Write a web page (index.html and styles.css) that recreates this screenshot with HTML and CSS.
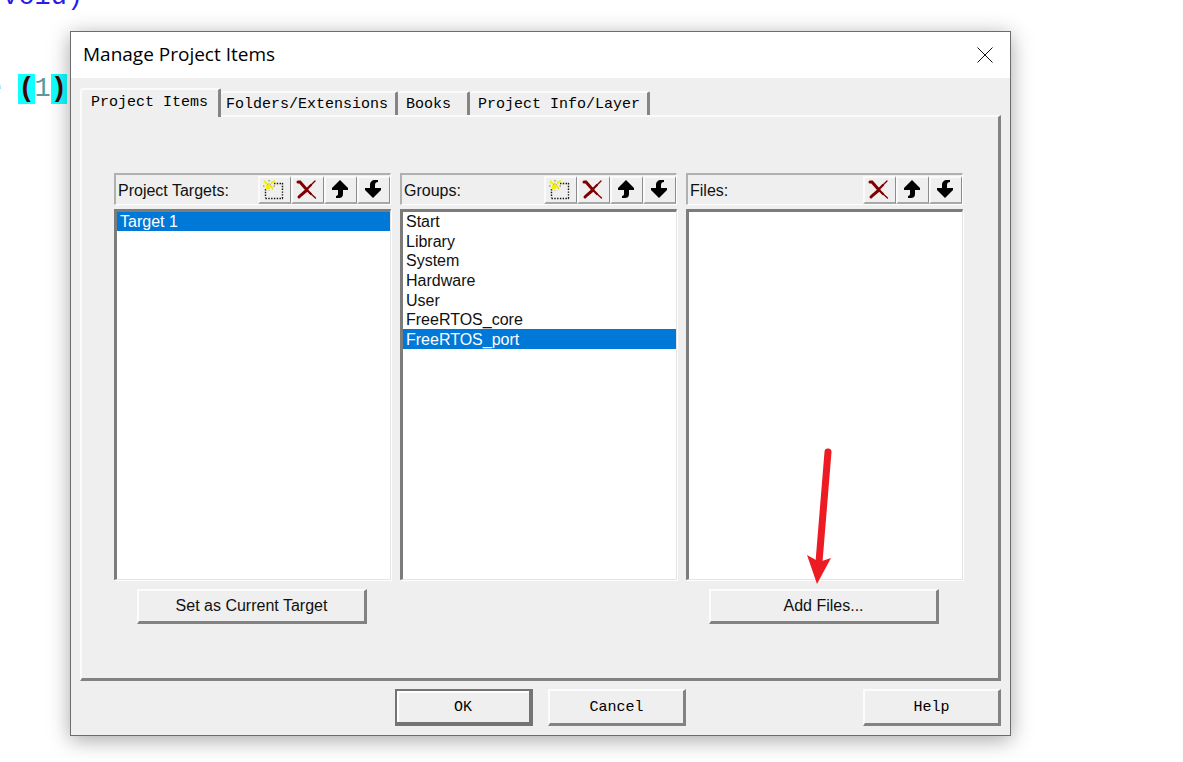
FILE: index.html
```html
<!DOCTYPE html>
<html lang="en">
<head>
<meta charset="utf-8">
<title>Manage Project Items</title>
<link rel="stylesheet" href="styles.css">
</head>
<body>
<svg class="symbols" aria-hidden="true">
  <symbol id="icon-new" viewBox="0 0 22 22">
    <path d="M11 4.500H20M2.500 10V19M2.500 19.500H20M19.500 4V20" fill="none" stroke="#111" stroke-width="1.400" stroke-dasharray="1.400 1.400"/>
    <path d="M1 2l10 9M11 2L2 11M6 1v11M0 7h12" fill="none" stroke="#77774a" stroke-width="1" stroke-dasharray="1.500 2"/>
    <path d="M1 2l3 3M6 5v5M3 7h6M8 4l4-2M8 8l2 1M3 10l2-2" fill="none" stroke="#f5f000" stroke-width="2"/>
  </symbol>
  <symbol id="icon-delete" viewBox="0 0 22 22">
    <g fill="none" stroke="#800000" stroke-linecap="round">
      <path d="M2 3l2 0L11 11M11 11L5 16 3 18" stroke-width="3"/>
      <path d="M10 10L15 15M10 11L15 6" stroke-width="2.200"/>
      <path d="M14 14L19.500 19M14 7L19 2" stroke-width="1.400"/>
    </g>
  </symbol>
  <symbol id="icon-up" viewBox="0 0 22 22">
    <path d="M11 1l8 8v2h-5v4c0 3-2 4-4 4H7v-2c1 0 2-1 2-2v-4H3V9z"/>
  </symbol>
  <symbol id="icon-down" viewBox="0 0 22 22">
    <path d="M11 19l-8-8V9h5V6c0-3 2-5 5-5h3v2c-2 0-3 1-3 3v3h6v2z"/>
  </symbol>
</svg>

<div class="editor">
  <p class="code-line code-top">(void)</p>
  <p class="code-line code-loop"><span class="keyword">e</span> <mark>(</mark><span class="number">1</span><mark>)</mark></p>
</div>

<main class="dialog" role="dialog" aria-labelledby="dialog-title">
  <header class="titlebar">
    <h1 id="dialog-title">Manage Project Items</h1>
    <button class="close" type="button" aria-label="Close">
      <svg viewBox="0 0 16 16" aria-hidden="true"><path d="M.5.5l15 15M15.500.5l-15 15"/></svg>
    </button>
  </header>

  <div class="content">
    <div class="tabs" role="tablist">
      <button class="tab tab-active" type="button" role="tab" aria-selected="true">Project Items</button>
      <button class="tab tab-folders" type="button" role="tab" aria-selected="false">Folders/Extensions</button>
      <button class="tab tab-books" type="button" role="tab" aria-selected="false">Books</button>
      <button class="tab tab-info" type="button" role="tab" aria-selected="false">Project Info/Layer</button>
    </div>

    <div class="panel" role="tabpanel">
      <section class="column">
        <div class="column-head">
          <h2 id="targets-label">Project Targets:</h2>
          <button class="tool" type="button" aria-label="New target"><svg><use href="#icon-new"/></svg></button>
          <button class="tool" type="button" aria-label="Delete target"><svg><use href="#icon-delete"/></svg></button>
          <button class="tool" type="button" aria-label="Move target up"><svg><use href="#icon-up"/></svg></button>
          <button class="tool" type="button" aria-label="Move target down"><svg><use href="#icon-down"/></svg></button>
        </div>
        <div class="list">
          <ul class="items" role="listbox" aria-labelledby="targets-label">
            <li class="item selected" role="option" aria-selected="true">Target 1</li>
          </ul>
        </div>
        <div class="action"><button class="button" type="button">Set as Current Target</button></div>
      </section>

      <section class="column">
        <div class="column-head">
          <h2 id="groups-label">Groups:</h2>
          <button class="tool" type="button" aria-label="New group"><svg><use href="#icon-new"/></svg></button>
          <button class="tool" type="button" aria-label="Delete group"><svg><use href="#icon-delete"/></svg></button>
          <button class="tool" type="button" aria-label="Move group up"><svg><use href="#icon-up"/></svg></button>
          <button class="tool" type="button" aria-label="Move group down"><svg><use href="#icon-down"/></svg></button>
        </div>
        <div class="list">
          <ul class="items items-groups" role="listbox" aria-labelledby="groups-label">
            <li class="item" role="option" aria-selected="false">Start</li>
            <li class="item" role="option" aria-selected="false">Library</li>
            <li class="item" role="option" aria-selected="false">System</li>
            <li class="item" role="option" aria-selected="false">Hardware</li>
            <li class="item" role="option" aria-selected="false">User</li>
            <li class="item" role="option" aria-selected="false">FreeRTOS_core</li>
            <li class="item selected" role="option" aria-selected="true">FreeRTOS_port</li>
          </ul>
        </div>
        <div class="action"></div>
      </section>

      <section class="column">
        <div class="column-head">
          <h2 id="files-label">Files:</h2>
          <button class="tool" type="button" aria-label="Delete file"><svg><use href="#icon-delete"/></svg></button>
          <button class="tool" type="button" aria-label="Move file up"><svg><use href="#icon-up"/></svg></button>
          <button class="tool" type="button" aria-label="Move file down"><svg><use href="#icon-down"/></svg></button>
        </div>
        <div class="list">
          <ul class="items" role="listbox" aria-labelledby="files-label"></ul>
        </div>
        <div class="action">
          <button class="button" type="button">Add Files...</button>
          <svg class="pointer" viewBox="0 0 28 138" aria-hidden="true">
            <path d="M22 4L13 114" fill="none" stroke="#ed1c24" stroke-width="7" stroke-linecap="round"/>
            <path d="M1 107l9 5 6 1 9-3-14 26z" fill="#ed1c24"/>
          </svg>
        </div>
      </section>
    </div>

    <footer class="footer">
      <button class="button button-default" type="button">OK</button>
      <button class="button" type="button">Cancel</button>
      <button class="button button-help" type="button">Help</button>
    </footer>
  </div>
</main>
</body>
</html>
```

FILE: styles.css
```css
* { box-sizing: border-box; }

body {
  margin: 0;
  min-height: 100vh;
  padding: 31px 172px 26px 70px;
  display: flex;
  background: #fff;
  color: #111;
  font: 16px/20px "Liberation Sans", Arial, sans-serif;
  overflow: hidden;
}

h1, h2, p, ul { margin: 0; padding: 0; font-weight: normal; }
button { margin: 0; padding: 0; color: inherit; font: inherit; }
svg { display: block; }
.symbols { position: absolute; width: 0; height: 0; }

/* Source editor behind the dialog */
.editor { position: absolute; inset: 0; overflow: hidden; }
.code-line {
  position: absolute;
  left: -14px;
  color: #2a1aee;
  font: 27px/32px "Liberation Mono", monospace;
  white-space: pre;
}
.code-top { top: -19px; }
.code-loop { top: 73px; }
.keyword { color: #8abaff; }
.number { color: #5a9a9a; }
mark { background: #1ff; color: #400; font-weight: bold; }

/* Dialog window */
.dialog {
  position: relative;
  flex: 1;
  display: flex;
  flex-direction: column;
  border: 1px solid #6c6c6c;
  background: #efefef;
  box-shadow: 0 4px 20px rgba(0, 0, 0, .35);
}
.titlebar {
  display: flex;
  align-items: center;
  justify-content: space-between;
  height: 46px;
  padding: 0 17px 0 12px;
  background: #fff;
}
.titlebar h1 { padding-bottom: 2px; color: #000; font: 19px/24px "Open Sans", "Noto Sans", sans-serif; }
.close { border: 0; background: none; }
.close svg { width: 16px; height: 16px; fill: none; stroke: #111; stroke-width: 1; }
.content { flex: 1; display: flex; flex-direction: column; padding: 10px 9px 9px; }

/* Tabs */
.tabs { display: flex; align-items: flex-end; color: #000; font: 15px/20px "Liberation Mono", monospace; }
.tab {
  height: 24px;
  padding-top: 2px;
  border: 0;
  border-top: 2px solid #fbfbfb;
  border-right: 3px solid #858585;
  border-radius: 3px 2px 0 0;
  background: #efefef;
  text-align: left;
  white-space: nowrap;
}
.tab-active {
  position: relative;
  width: 141px;
  height: 29px;
  margin-bottom: -2px;
  padding: 0 0 2px 9px;
  border-left: 2px solid #fbfbfb;
}
.tab-folders { width: 177px; padding-left: 5px; }
.tab-books { width: 72px; padding-left: 8px; }
.tab-info { width: 180px; padding-left: 8px; }

.panel {
  flex: 1;
  display: grid;
  grid-template-columns: repeat(3, 1fr);
  gap: 9px;
  padding: 56px 35px 54px 32px;
  border: 2px solid #fbfbfb;
  border-right: 3px solid #828282;
  border-bottom: 3px solid #828282;
}

/* Columns */
.column { display: flex; flex-direction: column; }
.column-head {
  display: flex;
  align-items: center;
  height: 32px;
  border: 2px solid #b0b0b0;
  border-right: 1px solid #fff;
  border-bottom: 1px solid #fff;
}
.column-head h2 { flex: 1; padding: 2px 0 0 2px; font-size: 16px; }
.tool {
  display: grid;
  place-items: center;
  width: 33px;
  height: 28px;
  padding-right: 2px;
  border: 2px solid #fafafa;
  border-right: 1px solid #8c8c8c;
  border-bottom: 2px solid #a8a8a8;
  background: #efefef;
}
.tool svg { width: 22px; height: 22px; fill: #000; }
.list {
  flex: 1;
  margin-top: 4px;
  border: 3px solid #7c7c7c;
  border-right: 1px solid #e3e3e3;
  border-bottom: 1px solid #e3e3e3;
  background: #fff;
  box-shadow: 1px 1px 0 #fff;
}
.items { display: grid; grid-auto-rows: 1fr; list-style: none; }
.items-groups { min-height: 137px; }
.item { display: flex; align-items: center; padding-left: 3px; line-height: 19px; }
.selected { background: #0078d7; color: #fff; }
.action { position: relative; height: 44px; padding: 9px 24px 0 23px; }

/* Push buttons */
.button {
  width: 100%;
  height: 35px;
  border: 2px solid #fcfcfc;
  border-right: 3px solid #828282;
  border-bottom: 3px solid #828282;
  background: #efefef;
}
.pointer { position: absolute; left: 120px; bottom: 38px; width: 28px; height: 138px; }

.footer { display: flex; gap: 15px; padding: 8px 0 0 315px; color: #000; font: 15px/20px "Liberation Mono", monospace; }
.footer .button { width: 138px; height: 37px; padding-top: 2px; }
.footer .button-default { border: 3px double #747474; border-width: 2px 4px 4px 2px; border-style: solid; box-shadow: inset 2px 2px 0 #fff; }
.footer .button-help { margin-left: auto; }
```
